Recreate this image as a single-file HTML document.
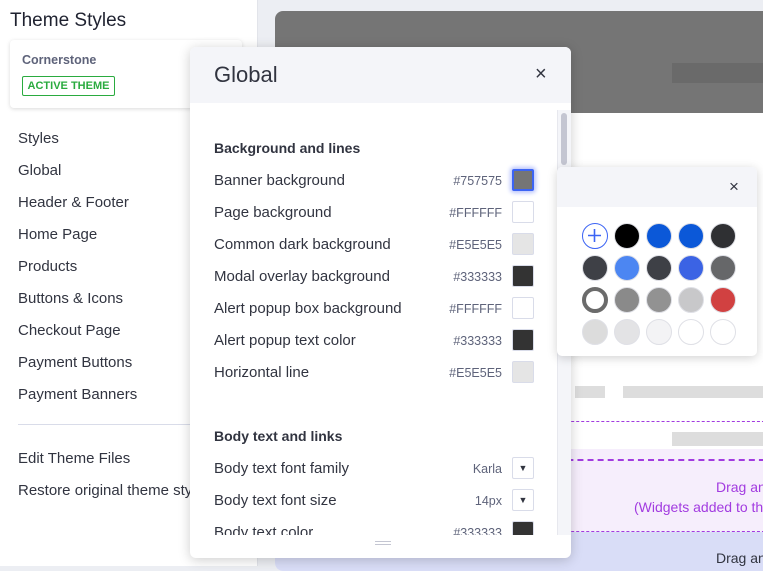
<!DOCTYPE html><html><head><style>
*{margin:0;padding:0;box-sizing:border-box}
body{width:763px;height:566px;overflow:hidden;position:relative;background:#eceef3;font-family:"Liberation Sans",sans-serif;color:#313440}
.a{position:absolute}
.nav{left:18px;font-size:15px;color:#313440}
.row{position:absolute;left:214px;width:320px;font-size:15px;color:#313440;height:22px;line-height:24px}
.row .h{position:absolute;right:32px;top:0;font-size:12.5px;color:#5e637a}
.row .s{position:absolute;right:0;top:0;width:22px;height:22px;border:1px solid #d9dce9;border-radius:2px}
.c{position:absolute;width:26px;height:26px;border-radius:50%;border:1px solid #dfe0e6}
</style></head><body>
<div class="a" style="left:0;top:0;width:258px;height:566px;background:#fff;border-right:1px solid #e2e4ea"></div>
<div class="a" style="left:10px;top:10px;font-size:19px;color:#1f2230">Theme Styles</div>
<div class="a" style="left:10px;top:40px;width:232px;height:68px;background:#fff;border-radius:4px;box-shadow:0 1px 4px rgba(0,0,0,.15)"></div>
<div class="a" style="left:22px;top:53px;font-size:12.5px;font-weight:bold;color:#5e637a">Cornerstone</div>
<div class="a" style="left:22px;top:76px;width:93px;height:20px;border:1px solid #2aab3f;border-radius:2px;color:#2aab3f;font-size:11px;font-weight:bold;text-align:center;line-height:18px">ACTIVE THEME</div>
<div class="a nav" style="top:130px">Styles</div>
<div class="a nav" style="top:162px">Global</div>
<div class="a nav" style="top:194px">Header &amp; Footer</div>
<div class="a nav" style="top:226px">Home Page</div>
<div class="a nav" style="top:258px">Products</div>
<div class="a nav" style="top:290px">Buttons &amp; Icons</div>
<div class="a nav" style="top:322px">Checkout Page</div>
<div class="a nav" style="top:354px">Payment Buttons</div>
<div class="a nav" style="top:386px">Payment Banners</div>
<div class="a" style="left:18px;top:424px;width:222px;height:1px;background:#d9dce9"></div>
<div class="a nav" style="top:450px">Edit Theme Files</div>
<div class="a nav" style="top:482px;white-space:nowrap">Restore original theme styles</div>

<!-- preview -->
<div class="a" style="left:275px;top:11px;width:500px;height:560px;background:#fff;border-radius:8px;overflow:hidden">
 <div class="a" style="left:0;top:0;width:500px;height:102px;background:#757575"></div>
 <div class="a" style="left:397px;top:52px;width:110px;height:20px;background:#6a6a6a"></div>
 <div class="a" style="left:300px;top:375px;width:30px;height:12px;background:#ddd"></div>
 <div class="a" style="left:348px;top:375px;width:160px;height:12px;background:#ddd"></div>
 <div class="a" style="left:0;top:410px;width:500px;border-top:1px dashed #a23be0"></div>
 <div class="a" style="left:397px;top:421px;width:110px;height:14px;background:#ddd"></div>
 <div class="a" style="left:0;top:438px;width:500px;height:10px;background:#f6eefc"></div>
 <div class="a" style="left:0;top:448px;width:500px;height:73px;background:#f6eefc;border-top:2px dashed #a23be0;border-bottom:1px dashed #a23be0"></div>
 <div class="a" style="left:441px;top:468px;font-size:14px;color:#a23be0;white-space:nowrap">Drag and drop</div>
 <div class="a" style="left:359px;top:488px;font-size:14px;color:#a23be0;white-space:nowrap">(Widgets added to this region</div>
 <div class="a" style="left:0;top:521px;width:500px;height:50px;background:#d9ddf7"></div>
 <div class="a" style="left:441px;top:539px;font-size:14px;color:#313440;white-space:nowrap">Drag and drop</div>
</div>

<!-- modal -->
<div class="a" style="left:190px;top:47px;width:381px;height:511px;background:#fff;border-radius:6px;box-shadow:0 2px 12px rgba(0,0,0,.2);overflow:hidden">
 <div class="a" style="left:0;top:0;width:381px;height:56px;background:#f4f5f9"></div>
 <div class="a" style="left:24px;top:15px;font-size:22px;color:#313440">Global</div>
 <div class="a" style="left:345px;top:16px;font-size:20px;color:#313440">×</div>
 <div class="a" style="left:367px;top:63px;width:14px;height:425px;background:#f4f5f9;border-left:1px solid #e7e8ee"></div>
 <div class="a" style="left:371px;top:66px;width:6px;height:52px;background:#c4c6d2;border-radius:3px"></div>
 <div class="a" style="left:185px;top:494px;width:16px;height:1px;background:#c4c6d2;box-shadow:0 3px 0 #c4c6d2"></div>
</div>
<div class="a" style="left:214px;top:140px;font-size:14px;font-weight:bold;color:#313440">Background and lines</div>
<div class="row" style="top:169px">Banner background<span class="h">#757575</span><span class="s" style="background:#757575;border:2px solid #3c64f4;box-shadow:0 0 4px 2px #b9c4fb"></span></div>
<div class="row" style="top:201px">Page background<span class="h">#FFFFFF</span><span class="s" style="background:#fff"></span></div>
<div class="row" style="top:233px">Common dark background<span class="h">#E5E5E5</span><span class="s" style="background:#e5e5e5"></span></div>
<div class="row" style="top:265px">Modal overlay background<span class="h">#333333</span><span class="s" style="background:#333"></span></div>
<div class="row" style="top:297px">Alert popup box background<span class="h">#FFFFFF</span><span class="s" style="background:#fff"></span></div>
<div class="row" style="top:329px">Alert popup text color<span class="h">#333333</span><span class="s" style="background:#333"></span></div>
<div class="row" style="top:361px">Horizontal line<span class="h">#E5E5E5</span><span class="s" style="background:#e5e5e5"></span></div>
<div class="a" style="left:214px;top:428px;font-size:14px;font-weight:bold;color:#313440">Body text and links</div>
<div class="row" style="top:457px">Body text font family<span class="h">Karla</span><span class="s" style="font-size:9px;text-align:center;line-height:20px">▼</span></div>
<div class="row" style="top:489px">Body text font size<span class="h">14px</span><span class="s" style="font-size:9px;text-align:center;line-height:20px">▼</span></div>
<div class="a" style="left:190px;top:519px;width:366px;height:16px;overflow:hidden"><div class="row" style="top:2px;left:24px">Body text color<span class="h">#333333</span><span class="s" style="background:#333"></span></div></div>

<!-- color popup -->
<div class="a" style="left:557px;top:167px;width:200px;height:189px;background:#fff;border-radius:5px;box-shadow:0 2px 10px rgba(0,0,0,.18);overflow:hidden">
 <div class="a" style="left:0;top:0;width:200px;height:40px;background:#f4f5f9"></div>
 <div class="a" style="left:172px;top:10px;font-size:17px;color:#313440">×</div>
</div>
<div class="c" style="left:582px;top:223px;border:1.5px solid #3c64f4"><svg width="23" height="23" style="position:absolute;left:0;top:0"><path d="M11.5 5v13M5 11.5h13" stroke="#3c64f4" stroke-width="1.6"/></svg></div>
<div class="c" style="left:614px;top:223px;background:#000"></div>
<div class="c" style="left:646px;top:223px;background:#0b58d8"></div>
<div class="c" style="left:678px;top:223px;background:#0b58d8"></div>
<div class="c" style="left:710px;top:223px;background:#2f3033"></div>
<div class="c" style="left:582px;top:255px;background:#3e4046"></div>
<div class="c" style="left:614px;top:255px;background:#4c86f2"></div>
<div class="c" style="left:646px;top:255px;background:#3e4046"></div>
<div class="c" style="left:678px;top:255px;background:#3b63e4"></div>
<div class="c" style="left:710px;top:255px;background:#666769"></div>
<div class="c" style="left:582px;top:287px;border:4px solid #6b6b6b;background:#fff"></div>
<div class="c" style="left:614px;top:287px;background:#8a8a8a"></div>
<div class="c" style="left:646px;top:287px;background:#929292"></div>
<div class="c" style="left:678px;top:287px;background:#c8c8ca"></div>
<div class="c" style="left:710px;top:287px;background:#d14141"></div>
<div class="c" style="left:582px;top:319px;background:#dcdcdc"></div>
<div class="c" style="left:614px;top:319px;background:#e3e3e5"></div>
<div class="c" style="left:646px;top:319px;background:#f3f3f5"></div>
<div class="c" style="left:678px;top:319px;background:#fff"></div>
<div class="c" style="left:710px;top:319px;background:#fff"></div>
</body></html>
